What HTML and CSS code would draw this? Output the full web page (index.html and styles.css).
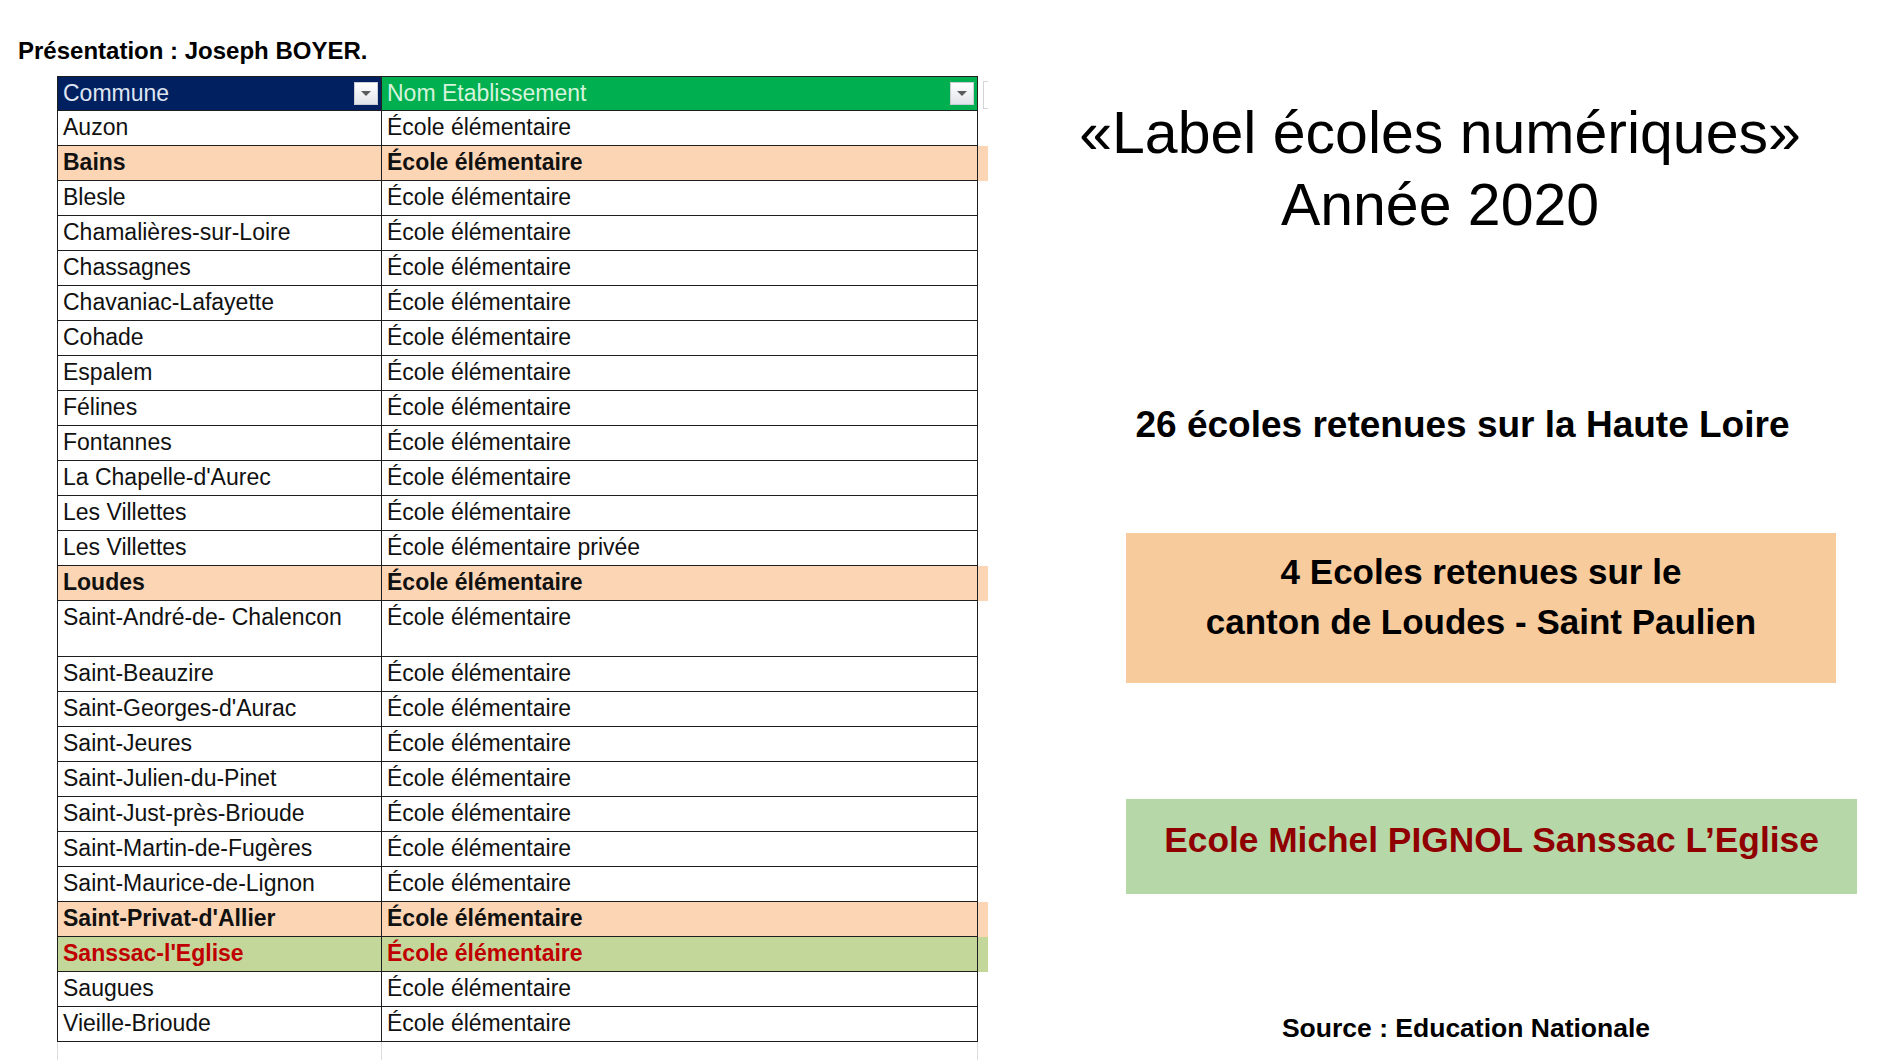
FILE: index.html
```html
<!DOCTYPE html>
<html lang="fr">
<head>
<meta charset="utf-8">
<title>Label écoles numériques 2020</title>
<link rel="stylesheet" href="styles.css">
</head>
<body>
<div class="page">
  <section class="left">
    <div class="author">Présentation : Joseph BOYER.</div>
    <table class="sheet">
      <colgroup><col class="c1"><col class="c2"><col class="c3"></colgroup>
      <thead>
        <tr>
          <th class="h-commune"><div class="hcell"><span>Commune</span><span class="dd"><span class="tri"></span></span></div></th>
          <th class="h-nom"><div class="hcell"><span>Nom Etablissement</span><span class="dd"><span class="tri"></span></span></div></th>
          <th class="h-next"><span class="bracket"></span></th>
        </tr>
      </thead>
      <tbody>
        <tr><td>Auzon</td><td>École élémentaire</td><td class="x"></td></tr>
        <tr class="peach"><td>Bains</td><td>École élémentaire</td><td class="x"></td></tr>
        <tr><td>Blesle</td><td>École élémentaire</td><td class="x"></td></tr>
        <tr><td>Chamalières-sur-Loire</td><td>École élémentaire</td><td class="x"></td></tr>
        <tr><td>Chassagnes</td><td>École élémentaire</td><td class="x"></td></tr>
        <tr><td>Chavaniac-Lafayette</td><td>École élémentaire</td><td class="x"></td></tr>
        <tr><td>Cohade</td><td>École élémentaire</td><td class="x"></td></tr>
        <tr><td>Espalem</td><td>École élémentaire</td><td class="x"></td></tr>
        <tr><td>Félines</td><td>École élémentaire</td><td class="x"></td></tr>
        <tr><td>Fontannes</td><td>École élémentaire</td><td class="x"></td></tr>
        <tr><td>La Chapelle-d'Aurec</td><td>École élémentaire</td><td class="x"></td></tr>
        <tr><td>Les Villettes</td><td>École élémentaire</td><td class="x"></td></tr>
        <tr><td>Les Villettes</td><td>École élémentaire privée</td><td class="x"></td></tr>
        <tr class="peach"><td>Loudes</td><td>École élémentaire</td><td class="x"></td></tr>
        <tr class="tall"><td>Saint-André-de- Chalencon</td><td>École élémentaire</td><td class="x"></td></tr>
        <tr><td>Saint-Beauzire</td><td>École élémentaire</td><td class="x"></td></tr>
        <tr><td>Saint-Georges-d'Aurac</td><td>École élémentaire</td><td class="x"></td></tr>
        <tr><td>Saint-Jeures</td><td>École élémentaire</td><td class="x"></td></tr>
        <tr><td>Saint-Julien-du-Pinet</td><td>École élémentaire</td><td class="x"></td></tr>
        <tr><td>Saint-Just-près-Brioude</td><td>École élémentaire</td><td class="x"></td></tr>
        <tr><td>Saint-Martin-de-Fugères</td><td>École élémentaire</td><td class="x"></td></tr>
        <tr><td>Saint-Maurice-de-Lignon</td><td>École élémentaire</td><td class="x"></td></tr>
        <tr class="peach"><td>Saint-Privat-d'Allier</td><td>École élémentaire</td><td class="x"></td></tr>
        <tr class="green"><td>Sanssac-l'Eglise</td><td>École élémentaire</td><td class="x"></td></tr>
        <tr><td>Saugues</td><td>École élémentaire</td><td class="x"></td></tr>
        <tr><td>Vieille-Brioude</td><td>École élémentaire</td><td class="x"></td></tr>
        <tr class="grid"><td></td><td></td><td class="x"></td></tr>
      </tbody>
    </table>
  </section>
  <section class="right">
    <h1 class="title">«Label écoles numériques»<br>Année 2020</h1>
    <p class="count">26 écoles retenues sur la Haute Loire</p>
    <div class="box-peach">4 Ecoles retenues sur le<br>canton de Loudes - Saint Paulien</div>
    <div class="box-green">Ecole Michel PIGNOL Sanssac L’Eglise</div>
    <p class="source">Source : Education Nationale</p>
  </section>
</div>
</body>
</html>
```

FILE: styles.css
```css
* { box-sizing: border-box; }
html, body {
  margin: 0;
  padding: 0;
  background: #ffffff;
  width: 1878px;
  height: 1060px;
  overflow: hidden;
}
body {
  font-family: "Liberation Sans", Arial, sans-serif;
  color: #000;
}
.page {
  display: flex;
  width: 1878px;
  height: 1060px;
}
.left {
  width: 1060px;
  flex: none;
}
.author {
  margin: 36px 0 0 18px;
  font-size: 24px;
  font-weight: bold;
  line-height: 30px;
  height: 30px;
}
.sheet {
  margin: 10px 0 0 57px;
  border-collapse: collapse;
  table-layout: fixed;
  width: 931px;
  font-size: 23px;
  color: #111;
}
.sheet col.c1 { width: 324px; }
.sheet col.c2 { width: 596px; }
.sheet col.c3 { width: 11px; }
.sheet th, .sheet td {
  padding: 0 0 0 5px;
  height: 35px;
  line-height: 33px;
  border: 1px solid #1e1e1e;
  text-align: left;
  vertical-align: top;
  white-space: nowrap;
  overflow: hidden;
}
.sheet th {
  font-weight: normal;
  height: 34px;
  vertical-align: middle;
}
.h-commune { background: #002060; color: #dfe6f2; }
.h-nom { background: #00b050; color: #d6f3dc; }
.sheet th.h-next, .sheet td.x {
  border: none;
  padding: 0;
  background: transparent;
}
.hcell {
  display: flex;
  align-items: center;
  justify-content: space-between;
  padding-right: 3px;
}
.dd {
  width: 24px;
  height: 23px;
  border: 1px solid #c9ccd2;
  background: linear-gradient(#ffffff, #e1e4ea);
  display: flex;
  align-items: center;
  justify-content: center;
}
.tri {
  width: 0;
  height: 0;
  border-left: 5px solid transparent;
  border-right: 5px solid transparent;
  border-top: 5px solid #5a5a5a;
}
.bracket {
  display: block;
  margin: 2px 0 0 5px;
  width: 5px;
  height: 28px;
  border: 1px solid #d4d4d4;
  border-right: none;
}
.peach td { background: #fcd5b4; font-weight: bold; }
.sheet .peach td.x { background: #fcd5b4; }
.green td { background: #c4d79b; font-weight: bold; color: #c00000; }
.sheet .green td.x { background: #c4d79b; }
.sheet tr.tall td { height: 56px; }
.sheet tr.grid td {
  height: 20px;
  border-left: 1px solid #dcdcdc;
  border-right: 1px solid #dcdcdc;
  border-bottom: none;
}
.sheet tr.grid td.x { border: none; }

.right {
  flex: 1;
  display: flex;
  flex-direction: column;
  align-items: flex-start;
}
.title {
  margin: 97px 0 0 0;
  width: 760px;
  text-align: center;
  font-size: 59px;
  font-weight: normal;
  line-height: 72px;
  white-space: nowrap;
}
.count {
  margin: 162px 0 0 0;
  width: 805px;
  text-align: center;
  font-size: 37px;
  font-weight: bold;
  line-height: 44px;
  white-space: nowrap;
}
.box-peach {
  margin: 86px 0 0 66px;
  width: 710px;
  height: 150px;
  padding-top: 14px;
  background: #f8cb9d;
  text-align: center;
  font-size: 35px;
  font-weight: bold;
  line-height: 50px;
}
.box-green {
  margin: 116px 0 0 66px;
  width: 731px;
  height: 95px;
  padding-top: 16px;
  background: #b6d7a8;
  color: #900000;
  text-align: center;
  font-size: 35.3px;
  font-weight: bold;
  line-height: 50px;
  white-space: nowrap;
}
.source {
  margin: 118px 0 0 0;
  width: 812px;
  text-align: center;
  font-size: 26.5px;
  font-weight: bold;
  line-height: 32px;
}
```
